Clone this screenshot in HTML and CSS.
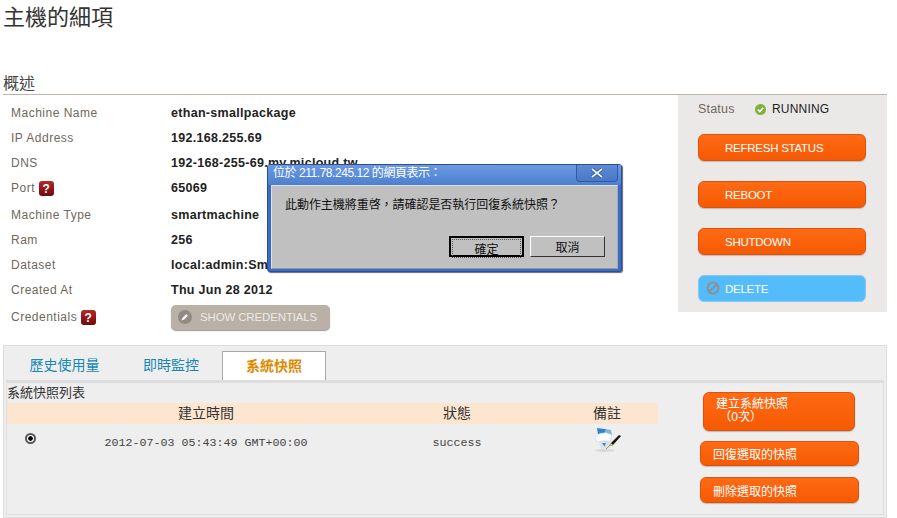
FILE: index.html
```html
<!DOCTYPE html>
<html lang="zh-TW">
<head>
    <meta charset="UTF-8">
    <title>主機的細項</title>
    <link rel="stylesheet" href="styles.css">
</head>
<body>
    <h1 class="page-title">主機的細項</h1>
    <h2 class="section-title">概述</h2>
    <div class="overview">
        <div class="details">
            <div class="row"><span class="label">Machine Name</span><span class="value">ethan-smallpackage</span></div>
            <div class="row"><span class="label">IP Address</span><span class="value">192.168.255.69</span></div>
            <div class="row"><span class="label">DNS</span><span class="value">192-168-255-69.my.micloud.tw</span></div>
            <div class="row row-port">
                <span class="label">Port
                    <svg class="help" viewBox="0 0 15 15"><defs><linearGradient id="helpFill" x1="0" y1="0" x2="0" y2="1"><stop offset="0" stop-color="#b52a2a"/><stop offset="1" stop-color="#6f0a0a"/></linearGradient></defs><rect width="15" height="15" rx="3" fill="url(#helpFill)"/><text x="7.5" y="12" text-anchor="middle" class="help-mark">?</text></svg>
                </span>
                <span class="value">65069</span>
            </div>
            <div class="row"><span class="label">Machine Type</span><span class="value">smartmachine</span></div>
            <div class="row"><span class="label">Ram</span><span class="value">256</span></div>
            <div class="row"><span class="label">Dataset</span><span class="value">local:admin:SmartOS</span></div>
            <div class="row"><span class="label">Created At</span><span class="value">Thu Jun 28 2012</span></div>
            <div class="row row-cred">
                <span class="label">Credentials
                    <svg class="help" viewBox="0 0 15 15"><rect width="15" height="15" rx="3" fill="url(#helpFill)"/><text x="7.5" y="12" text-anchor="middle" class="help-mark">?</text></svg>
                </span>
                <a class="btn-grey">
                    <svg class="btn-icon" viewBox="0 0 14 14"><circle cx="7" cy="7" r="7" fill="#8f8a84"/><path d="M3.5 10.5l.8-2.4 4-4 1.7 1.6-4 4z" fill="#f4f2ef"/></svg>
                    SHOW CREDENTIALS
                </a>
            </div>
        </div>
        <div class="actions">
            <div class="status">
                <span class="status-label">Status</span>
                <svg class="status-icon" viewBox="0 0 11 11"><circle cx="5.5" cy="5.5" r="5.5" fill="#7fb13c"/><path d="M2.8 5.6l2 2 3.4-3.8" fill="none" stroke="#fff" stroke-width="1.6"/></svg>
                <span>RUNNING</span>
            </div>
            <a class="btn">REFRESH STATUS</a>
            <a class="btn">REBOOT</a>
            <a class="btn">SHUTDOWN</a>
            <a class="btn btn-blue">
                <svg class="delete-icon" viewBox="0 0 14 14"><circle cx="7" cy="7" r="5.5" fill="none" stroke="#8a929a" stroke-width="2.2"/><path d="M3 11l8-8" stroke="#8a929a" stroke-width="2.2"/></svg>
                DELETE
            </a>
        </div>
    </div>

    <div class="tabs-box">
        <div class="tabs">
            <a class="tab">歷史使用量</a>
            <a class="tab">即時監控</a>
            <a class="tab tab-active">系統快照</a>
        </div>
        <div class="tab-panel">
            <div class="snapshots">
                <div class="snapshots-title">系統快照列表</div>
                <div class="snap-grid snap-head">
                    <span></span><span>建立時間</span><span>狀態</span><span>備註</span>
                </div>
                <div class="snap-grid snap-row">
                    <span class="radio"></span>
                    <span>2012-07-03 05:43:49 GMT+00:00</span>
                    <span>success</span>
                    <svg class="note-icon" viewBox="0 0 27 25">
                        <ellipse cx="11" cy="23.5" rx="10" ry="1.5" fill="#d8d8d8"/>
                        <path d="M3 1l14 2 1 5-2 13-9 1-2-8z" fill="#d5e4f0"/>
                        <path d="M3 1l9 1.300-1 4-7 1z" fill="#2f86cc"/>
                        <path d="M12 2.300l5 .7 1 5-6-1z" fill="#7fb6de"/>
                        <path d="M1 9q6-4 12-3l5 2-2 6q-7-1-13 1z" fill="#fafcfe" stroke="#c6d5e1" stroke-width=".5"/>
                        <path d="M8 16h4l-1.500 3.500z" fill="#5f7f9b"/>
                        <path d="M15 19l2-3 8-8 2 1-8 9z" fill="#161616"/>
                        <path d="M15 19l2-3 2 2z" fill="#e2c246"/>
                        <path d="M12 22l3-3" stroke="#b59a30" stroke-width="1"/>
                    </svg>
                </div>
            </div>
            <div class="snap-actions">
                <a class="btn btn-create">建立系統快照<br>&nbsp;（0次）</a>
                <a class="btn btn-snap">回復選取的快照</a>
                <a class="btn btn-snap">刪除選取的快照</a>
            </div>
        </div>
    </div>

    <div class="dialog">
        <div class="dialog-title">
            <span class="dialog-caption">位於 211.78.245.12 的網頁表示：</span>
            <span class="dialog-close">
                <svg viewBox="0 0 14 10" class="close-x"><path d="M2 1l10 8M12 1L2 9" stroke="#2a4f86" stroke-width="3.200"/><path d="M2 1l10 8M12 1L2 9" stroke="#eef3fb" stroke-width="1.800"/></svg>
            </span>
        </div>
        <div class="dialog-body">
            <p class="dialog-text">此動作主機將重啓，請確認是否執行回復系統快照？</p>
            <div class="dialog-buttons">
                <button class="dialog-btn dialog-btn-default"><span>確定</span></button>
                <button class="dialog-btn"><span>取消</span></button>
            </div>
        </div>
    </div>
</body>
</html>
```

FILE: styles.css
```css
body {
    margin: 0;
    padding: 0 10px 0 3px;
    background-color: #FFFFFF;
    color: #222;
    font-family: "Liberation Sans", "Noto Sans CJK TC", sans-serif;
    font-size: 12px;
    height: 518px;
    overflow: hidden;
    box-sizing: border-box;
}
.page-title {
    margin: 0;
    padding-top: 5px;
    height: 75px;
    box-sizing: border-box;
    font-size: 22px;
    line-height: 26px;
    font-weight: normal;
    color: #333;
}
.section-title {
    margin: 0;
    height: 19px;
    font-size: 16px;
    line-height: 17px;
    font-weight: normal;
    color: #444;
    border-bottom: 1px solid #bdb5ab;
}
.overview {
    display: flex;
    justify-content: space-between;
    height: 217px;
}
.details {
    padding: 6px 0 0 8px;
    width: 660px;
}
.row {
    display: flex;
    height: 25px;
    line-height: 25px;
    font-size: 13px;
}
.row-port {
    height: 27px;
}
.row-cred {
    height: 28px;
    align-items: center;
}
.label {
    width: 160px;
    color: #6f675c;
    font-size: 12px;
    letter-spacing: 0.5px;
    display: flex;
    align-items: center;
    gap: 4px;
    height: 25px;
}
.value {
    font-weight: bold;
    color: #222;
    font-size: 12.5px;
    letter-spacing: 0.3px;
}
.help {
    width: 15px;
    height: 15px;
}
.help-mark {
    fill: #fff;
    font-family: "Liberation Sans", sans-serif;
    font-size: 12px;
    font-weight: bold;
}
.btn-grey {
    display: flex;
    align-items: center;
    gap: 8px;
    width: 159px;
    height: 25px;
    padding-left: 7px;
    box-sizing: border-box;
    background-color: #b9b1a6;
    border-radius: 5px;
    box-shadow: 0 1px 1px #999;
    color: #ece9e4;
    font-size: 11.5px;
    letter-spacing: -0.15px;
}
.btn-icon {
    width: 14px;
    height: 14px;
}
.actions {
    width: 209px;
    background-color: #ebe9e7;
    padding: 0 21px 0 20px;
    box-sizing: border-box;
    display: flex;
    flex-direction: column;
}
.status {
    height: 39px;
    display: flex;
    align-items: center;
    padding-bottom: 11px;
    box-sizing: border-box;
    font-size: 12px;
    letter-spacing: 0.2px;
    color: #222;
}
.status-label {
    width: 57px;
    color: #6f675c;
    font-size: 12.5px;
}
.status-icon {
    width: 11px;
    height: 11px;
    margin-right: 6px;
}
.btn {
    display: flex;
    align-items: center;
    height: 27px;
    margin-bottom: 20px;
    padding-left: 26px;
    box-sizing: border-box;
    background: linear-gradient(#ff6a14, #f55a03);
    border: 1px solid #e0510a;
    border-radius: 6px;
    box-shadow: 0 1px 1px #bbb;
    color: #FFFFFF;
    font-size: 11.5px;
    letter-spacing: -0.25px;
}
.btn-blue {
    position: relative;
    background: #54bcfb;
    border-color: #8cc8ea;
    box-shadow: none;
    margin-bottom: 0;
}
.delete-icon {
    position: absolute;
    left: 7px;
    top: 5px;
    width: 14px;
    height: 14px;
}
.tabs-box {
    margin-top: 33px;
    height: 173px;
    box-sizing: border-box;
    background-color: #eeeeee;
    border: 1px solid #dddddd;
    padding: 5px 2px 0;
}
.tabs {
    display: flex;
    height: 29px;
    padding-left: 3px;
}
.tab {
    font-size: 14px;
    line-height: 29px;
    color: #1787b3;
    text-align: center;
}
.tab:nth-child(1) {
    width: 111px;
}
.tab:nth-child(2) {
    width: 102px;
}
.tab-active {
    width: 104px;
    background-color: #FFFFFF;
    border: 1px solid #aaa;
    border-bottom: none;
    box-sizing: border-box;
    color: #e08a00;
    font-weight: bold;
}
.tab-panel {
    height: 135px;
    box-sizing: border-box;
    border: 1px solid #dddddd;
    border-top: 3px solid #dddddd;
    display: flex;
}
.snapshots {
    width: 651px;
    color: #333;
}
.snapshots-title {
    height: 20px;
    line-height: 20px;
    font-size: 13px;
    color: #333;
}
.snap-grid {
    display: grid;
    grid-template-columns: 47px 304px 198px 102px;
    text-align: center;
    justify-items: center;
}
.snap-head {
    height: 21px;
    line-height: 21px;
    background-color: #fde6cf;
    font-size: 14px;
}
.snap-row {
    height: 40px;
    padding-top: 8px;
    box-sizing: border-box;
    font-family: "Liberation Mono", monospace;
    font-size: 11.67px;
    line-height: 22px;
    color: #444;
}
.snap-row span:nth-child(2) {
    white-space: nowrap;
}
.radio {
    width: 7px;
    height: 7px;
    margin-top: 1px;
    border: 2px solid #555;
    border-radius: 50%;
    background: radial-gradient(circle, #000 0 2px, #fff 2.5px);
}
.note-icon {
    width: 27px;
    height: 25px;
    margin-top: -5px;
}
.snap-actions {
    width: 224px;
    padding: 9px 0 0 42px;
    box-sizing: border-box;
    display: flex;
    flex-direction: column;
    align-items: flex-start;
}
.btn-create {
    width: 152px;
    height: 39px;
    margin: 0 0 10px 3px;
    padding-left: 12px;
    line-height: 13px;
    font-size: 12px;
    letter-spacing: 0;
}
.btn-snap {
    width: 159px;
    height: 26px;
    margin-bottom: 11px;
    padding-left: 12px;
    font-size: 12px;
    letter-spacing: 0;
}
.dialog {
    position: absolute;
    left: 267px;
    top: 164px;
    width: 355px;
    height: 108px;
    box-sizing: border-box;
    background-color: #3a6cc0;
    border: 1px solid #2a4f9a;
    border-radius: 3px;
    padding: 0 3px 3px;
    box-shadow: 1px 1px 1px #667;
}
.dialog-title {
    height: 20px;
    display: flex;
    justify-content: space-between;
    align-items: flex-start;
    color: #FFFFFF;
    font-size: 12px;
    line-height: 17px;
    background: linear-gradient(#6d9adf, #4b7fd0);
    margin: 0 -3px;
    padding: 0 3px 0 5px;
}
.dialog-caption {
    letter-spacing: -0.45px;
}
.dialog-close {
    width: 42px;
    height: 17px;
    box-sizing: border-box;
    border: 1px solid #2f5aa5;
    border-top: none;
    border-radius: 0 0 4px 4px;
    background: linear-gradient(#5c8ad4, #4a78c6);
    display: flex;
    justify-content: center;
    align-items: center;
}
.close-x {
    width: 14px;
    height: 10px;
}
.dialog-body {
    height: 84px;
    box-sizing: border-box;
    background-color: #c0c0c0;
    border: 1px solid #e0e0e0;
    border-right-color: #a0a8b8;
    border-bottom-color: #8f98a8;
    padding: 0 12px 0 13px;
}
.dialog-text {
    margin: 0;
    padding-top: 10px;
    height: 40px;
    font-size: 12px;
    color: #111;
    line-height: 18px;
    letter-spacing: -0.05px;
}
.dialog-buttons {
    display: flex;
    justify-content: flex-end;
    gap: 6px;
}
.dialog-btn {
    width: 75px;
    height: 21px;
    padding: 0;
    background-color: #c0c0c0;
    border: 1px solid;
    border-color: #fff #333 #333 #fff;
    font-family: inherit;
    font-size: 12px;
    color: #111;
}
.dialog-btn-default {
    border: 2px solid #000;
}
.dialog-btn-default span {
    display: block;
    margin: 1px;
    border: 1px dotted #555;
}
```
